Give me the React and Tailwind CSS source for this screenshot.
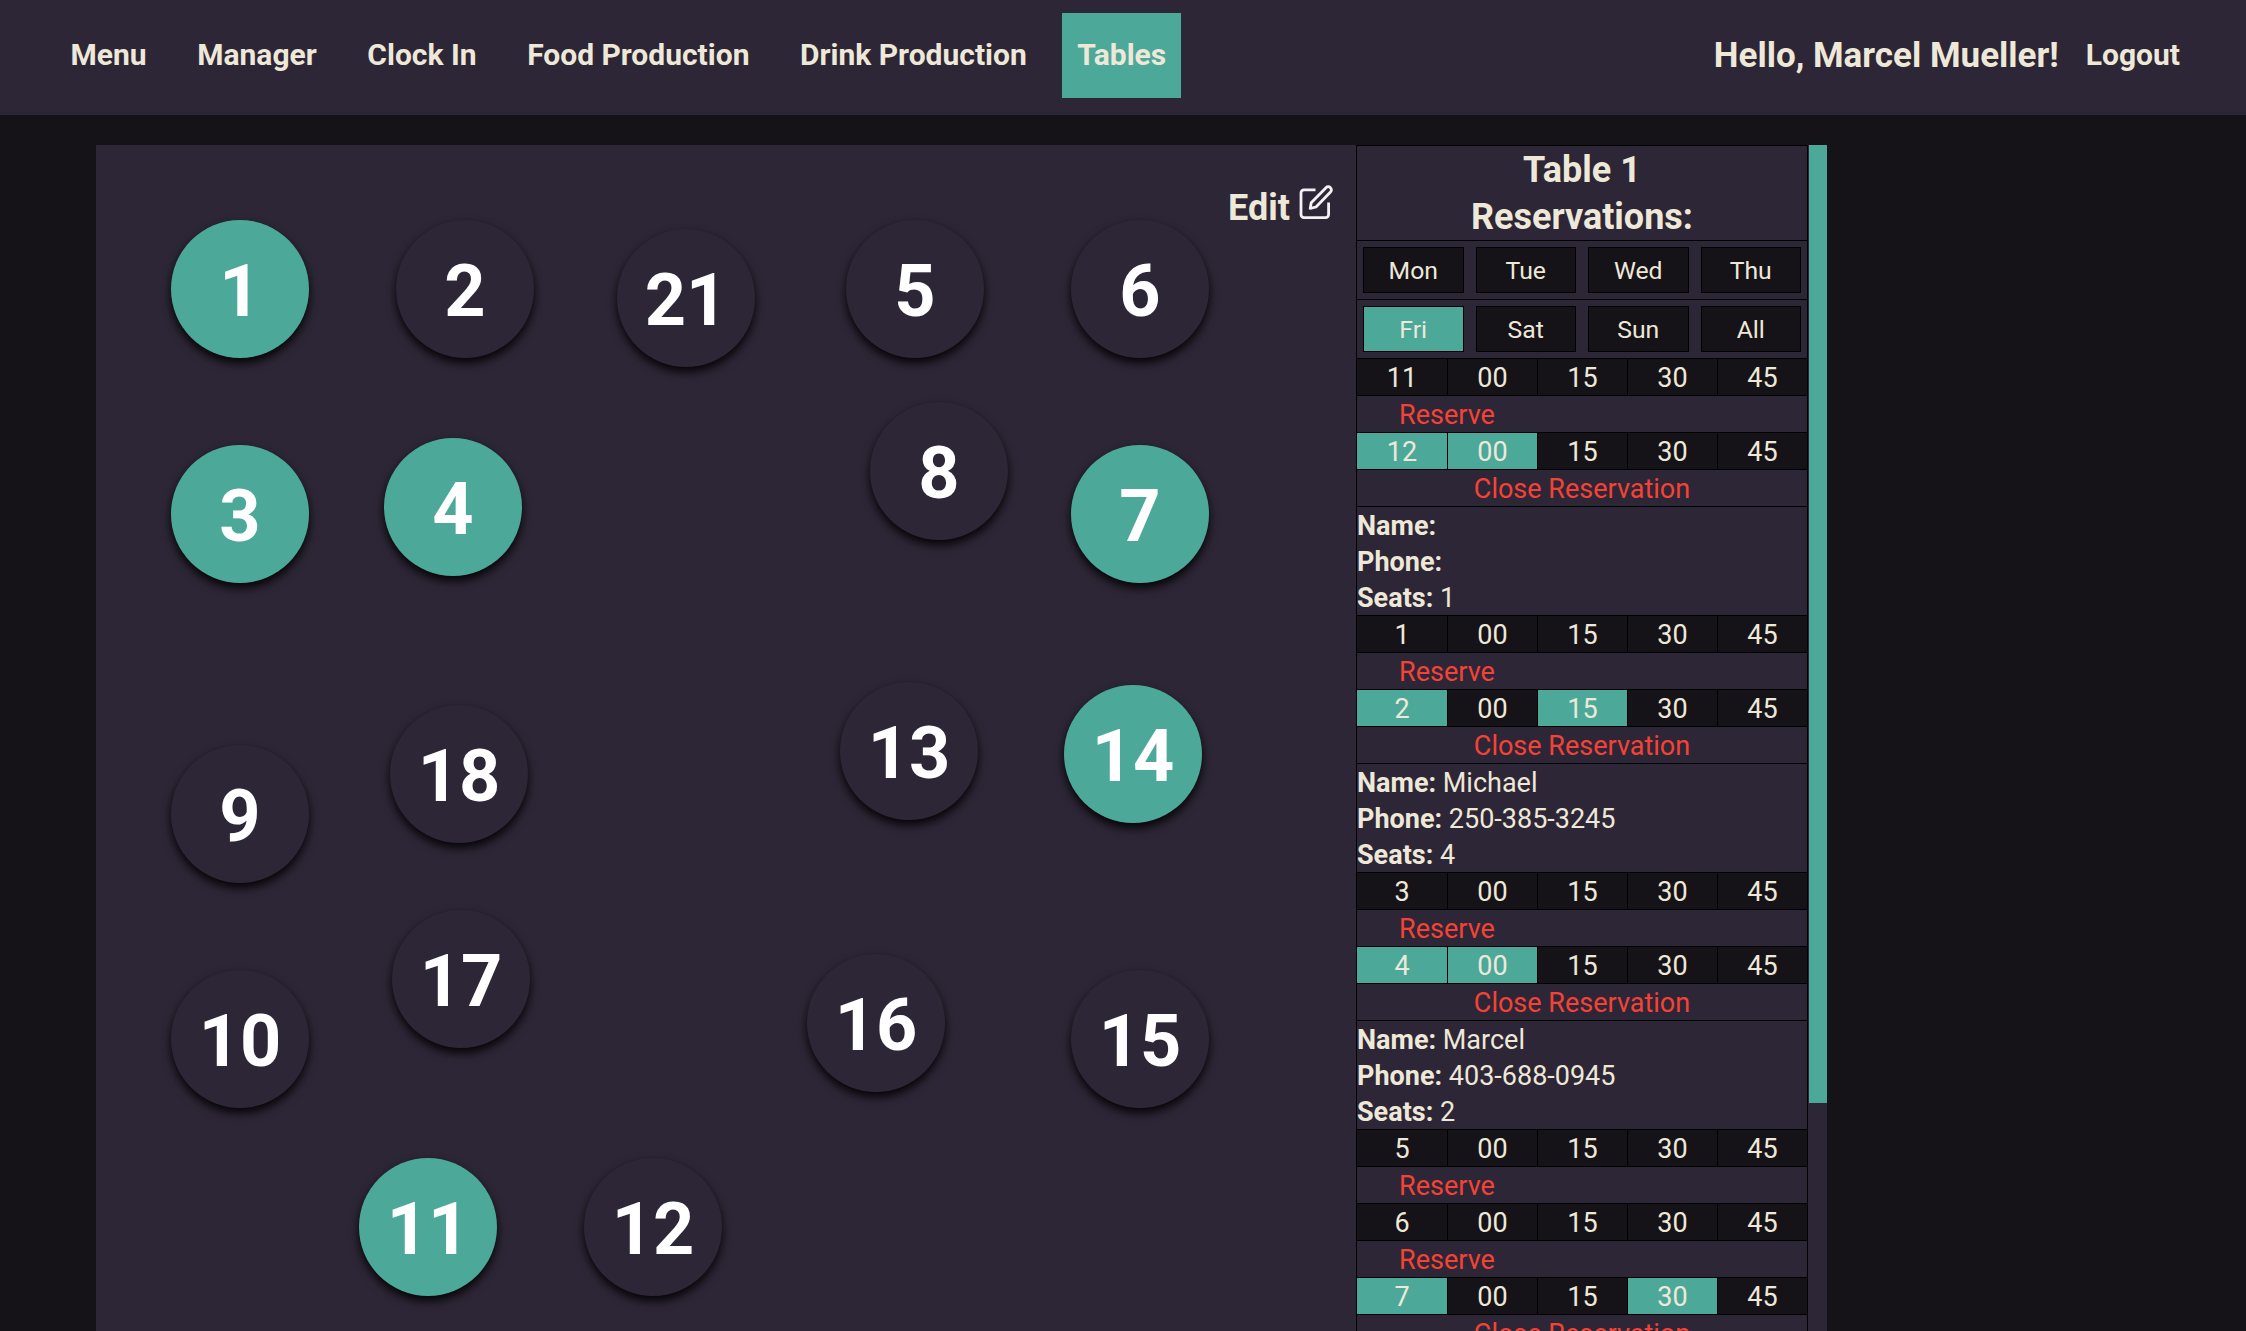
const NAV = [
  { label: "Menu" },
  { label: "Manager" },
  { label: "Clock In" },
  { label: "Food Production" },
  { label: "Drink Production" },
  { label: "Tables", active: true },
];

const TABLES = [
  { id: 1, x: 75, y: 75, busy: true },
  { id: 2, x: 300, y: 75 },
  { id: 21, x: 521, y: 84 },
  { id: 5, x: 750, y: 75 },
  { id: 6, x: 975, y: 75 },
  { id: 3, x: 75, y: 300, busy: true },
  { id: 4, x: 288, y: 293, busy: true },
  { id: 8, x: 774, y: 257 },
  { id: 7, x: 975, y: 300, busy: true },
  { id: 9, x: 75, y: 600 },
  { id: 18, x: 294, y: 560 },
  { id: 13, x: 744, y: 537 },
  { id: 14, x: 968, y: 540, busy: true },
  { id: 10, x: 75, y: 825 },
  { id: 17, x: 296, y: 765 },
  { id: 16, x: 711, y: 809 },
  { id: 15, x: 975, y: 825 },
  { id: 11, x: 263, y: 1013, busy: true },
  { id: 12, x: 488, y: 1013 },
];

const DAY_ROWS = [
  ["Mon", "Tue", "Wed", "Thu"],
  ["Fri", "Sat", "Sun", "All"],
];

const QUARTERS = ["00", "15", "30", "45"];

const HOURS = [
  { hour: "11" },
  { hour: "12", slot: "00", booking: { name: "", phone: "", seats: "1" } },
  { hour: "1" },
  { hour: "2", slot: "15", booking: { name: "Michael", phone: "250-385-3245", seats: "4" } },
  { hour: "3" },
  { hour: "4", slot: "00", booking: { name: "Marcel", phone: "403-688-0945", seats: "2" } },
  { hour: "5" },
  { hour: "6" },
  { hour: "7", slot: "30", closing: true },
];

function EditIcon() {
  return (
    <svg
      className="h-[36px] w-[36px]"
      viewBox="0 0 36 36"
      fill="none"
      stroke="#f4f1f4"
      strokeWidth="2.8"
      strokeLinejoin="round"
    >
      <path d="M16.5 5.8H5a3 3 0 0 0-3 3v21.8a3 3 0 0 0 3 3h21.6a3 3 0 0 0 3-3V18.5" />
      <path d="M11.2 24.4l1-5.6L27 3.7a3 3 0 0 1 4.5 4.4L17 23z" />
    </svg>
  );
}

function Navbar() {
  return (
    <header className="flex h-[115px] shrink-0 items-start justify-between bg-[#2d2636] pt-[13px] pr-[66px] pl-[55.5px] font-bold">
      <nav className="flex gap-[20.6px]">
        {NAV.map((item) => (
          <a
            key={item.label}
            className={`flex h-[85px] items-center px-[15px] pb-[2px] text-[30px] leading-[35px] ${item.active ? "bg-[#4ca999]" : ""}`}
          >
            {item.label}
          </a>
        ))}
      </nav>
      <div className="flex h-[85px] items-center gap-[27px]">
        <span className="text-[35px] leading-[41px]">Hello, Marcel Mueller!</span>
        <a className="pb-[2px] text-[30px] leading-[35px]">Logout</a>
      </div>
    </header>
  );
}

function FloorPlan() {
  return (
    <section className="relative w-[1260px] shrink-0">
      <button className="absolute top-[39px] left-[1132px] flex items-start gap-[9px]">
        <span className="pt-[3px] text-[36px] leading-[42px] font-bold">Edit</span>
        <EditIcon />
      </button>
      {TABLES.map((t) => (
        <div
          key={t.id}
          className={`absolute flex h-[138px] w-[138px] items-center justify-center rounded-full pt-[6px] text-[72px] leading-[84px] font-bold text-white shadow-[0_5px_10px_rgba(0,0,0,0.9)] ${t.busy ? "bg-[#4ca999]" : "bg-[#2d2636]"}`}
          style={{ left: t.x, top: t.y }}
        >
          {t.id}
        </div>
      ))}
    </section>
  );
}

function Detail({ label, value }) {
  return (
    <p>
      <b>{label}:</b> {value}
    </p>
  );
}

function HourBlock({ hour, slot, booking, closing }) {
  return (
    <>
      <div className="-mr-px grid grid-cols-[91px_90px_90px_90px_90px] border-b border-black text-center">
        {[hour, ...QUARTERS].map((cell, i) => (
          <div
            key={i}
            className={`h-[36px] border-r border-black pt-px ${slot && (i === 0 || cell === slot) ? "bg-[#4ca999]" : "bg-[#151317]"}`}
          >
            {cell}
          </div>
        ))}
      </div>
      {booking || closing ? (
        <div className="h-[37px] border-b border-black pt-px text-center text-[#f44336]">Close Reservation</div>
      ) : (
        <div className="h-[37px] border-b border-black pt-px text-[#f44336]">
          <div className="w-[180px] text-center">Reserve</div>
        </div>
      )}
      {booking && (
        <div className="h-[109px] border-b border-black pt-px">
          <Detail label="Name" value={booking.name} />
          <Detail label="Phone" value={booking.phone} />
          <Detail label="Seats" value={booking.seats} />
        </div>
      )}
    </>
  );
}

function Reservations() {
  return (
    <aside className="w-[452px] shrink-0 border border-b-0 border-black text-[27px] leading-[36px]">
      <h2 className="h-[95px] border-b border-black pt-px text-center text-[36px] leading-[47px] font-bold">
        Table 1<br />
        Reservations:
      </h2>
      {DAY_ROWS.map((row) => (
        <div key={row[0]} className="grid h-[59px] grid-cols-4 border-b border-black">
          {row.map((day) => (
            <div key={day} className="p-[6px]">
              <button
                className={`h-[46px] w-full border border-black pt-[2px] text-[24.75px] leading-[42px] ${day === "Fri" ? "bg-[#4ca999]" : "bg-[#151317]"}`}
              >
                {day}
              </button>
            </div>
          ))}
        </div>
      ))}
      {HOURS.map((h) => (
        <HourBlock key={h.hour} {...h} />
      ))}
    </aside>
  );
}

export default function App() {
  return (
    <div className="flex h-screen flex-col overflow-hidden bg-[#151317] font-['Roboto',sans-serif] text-[#eee8d9]">
      <Navbar />
      <main className="mt-[30px] ml-[96px] flex min-h-0 w-[1731px] flex-1 overflow-hidden bg-[#2d2636]">
        <FloorPlan />
        <Reservations />
        <div className="ml-px w-[18px] shrink-0">
          <div className="h-[958px] bg-[#4ca999]" />
        </div>
      </main>
    </div>
  );
}
